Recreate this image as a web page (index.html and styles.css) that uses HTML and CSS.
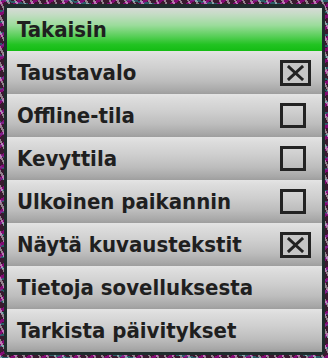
FILE: index.html
```html
<!DOCTYPE html>
<html>
<head>
<meta charset="utf-8">
<link rel="stylesheet" href="styles.css">
</head>
<body>
<div class="bg">
  <div class="panel">
    <div class="row row-green"><span class="label">Takaisin</span></div>
    <div class="row"><span class="label">Taustavalo</span><span class="slot"><span class="box checked"><svg width="17" height="16" viewBox="0 0 17 16"><path d="M2 2 L15 14 M15 2 L2 14" stroke="#222" stroke-width="3" stroke-linecap="square" fill="none"/></svg></span></span></div>
    <div class="row"><span class="label">Offline-tila</span><span class="slot"><span class="box"></span></span></div>
    <div class="row"><span class="label">Kevyttila</span><span class="slot"><span class="box"></span></span></div>
    <div class="row"><span class="label">Ulkoinen paikannin</span><span class="slot"><span class="box"></span></span></div>
    <div class="row"><span class="label">Näytä kuvaustekstit</span><span class="slot"><span class="box checked"><svg width="17" height="16" viewBox="0 0 17 16"><path d="M2 2 L15 14 M15 2 L2 14" stroke="#222" stroke-width="3" stroke-linecap="square" fill="none"/></svg></span></span></div>
    <div class="row"><span class="label">Tietoja sovelluksesta</span></div>
    <div class="row"><span class="label">Tarkista päivitykset</span></div>
  </div>
</div>
</body>
</html>
```

FILE: styles.css
```css
html, body {
  margin: 0;
  padding: 0;
}
body {
  width: 328px;
  height: 358px;
  overflow: hidden;
  font-family: "DejaVu Sans Condensed", "DejaVu Sans", sans-serif;
}
.bg {
  width: 328px;
  height: 358px;
  box-sizing: border-box;
  padding: 4px 3px 0 4px;
  background:
    repeating-linear-gradient(63deg, rgba(255,255,255,0.45) 0 2px, transparent 2px 7px),
    repeating-linear-gradient(-35deg, rgba(180,0,160,0.6) 0 3px, transparent 3px 9px),
    repeating-linear-gradient(10deg, rgba(30,160,160,0.5) 0 2px, transparent 2px 11px),
    #3a1a30;
}
.panel {
  width: 321px;
  box-sizing: border-box;
  border: 3px solid #1e2c2c;
  border-top-width: 4px;
  border-radius: 4px;
  background: #1e2c2c;
  display: flex;
  flex-direction: column;
}
.row {
  height: 43px;
  display: flex;
  align-items: center;
  padding-left: 10px;
  box-sizing: border-box;
  background: linear-gradient(#e4e4e4 0, #dcdcdc 12%, #cfcfcf 40%, #bdbdbd 70%, #a8a8a8 92%, #9e9e9e 100%);
  color: #1f1f1f;
}
.row-green {
  background: linear-gradient(#d6d9d6 0, #c4dcc4 15%, #9cdc9c 40%, #5acf5a 65%, #22c322 85%, #14bc14 100%);
}
.label {
  flex: 1;
  font-weight: bold;
  font-size: 22px;
  white-space: nowrap;
}
.slot {
  width: 42px;
  display: flex;
  align-items: center;
}
.box {
  width: 26px;
  height: 25px;
  box-sizing: border-box;
  border: 3px solid #232323;
  display: flex;
  align-items: center;
  justify-content: center;
}
.box.checked {
  width: 31px;
  height: 26px;
  background: #c6c6c6;
}
```
